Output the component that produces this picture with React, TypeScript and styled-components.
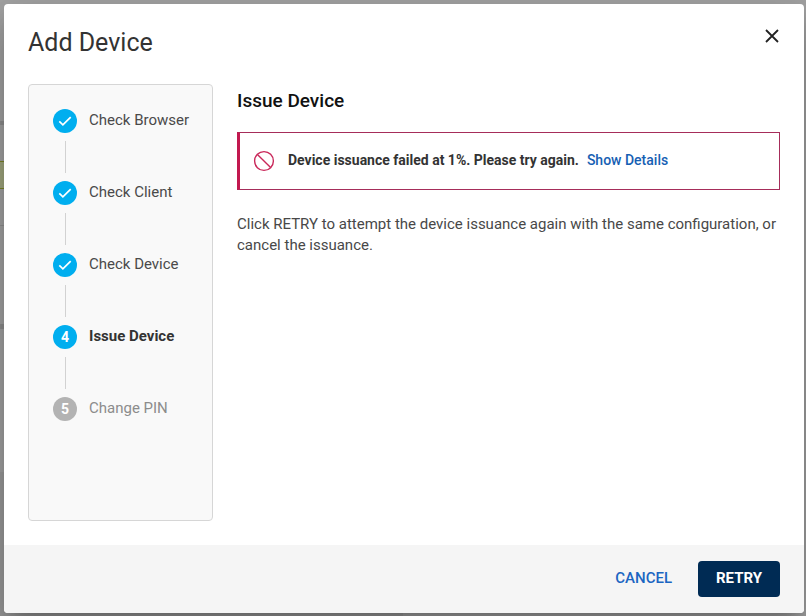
import React from "react";
import styled, { createGlobalStyle } from "styled-components";

const GlobalStyle = createGlobalStyle`
  * { box-sizing: border-box; }
  body {
    margin: 0;
    background: #a4a4a4;
    color: #484848;
    font: 15px/21px Roboto, "Liberation Sans", sans-serif;
  }
  button { font-family: inherit; cursor: pointer; }
`;

const Shell = styled.div`
  position: relative;
  display: flex;
  min-height: 100vh;
  padding: 4px 2px 3px 4px;
`;

const Backdrop = styled.div`
  position: absolute;
  inset: 0 50% 0 0;
  display: flex;
  flex-direction: column;
  overflow: hidden;
`;

const Band = styled.div<{ $height?: number; $color: string }>`
  flex: ${(p) => (p.$height ? `0 0 ${p.$height}px` : "1")};
  background: ${(p) => p.$color};
`;

const BackdropTag = styled.div`
  flex: 0 0 28px;
  width: 40px;
  background: #a3a980;
  border: solid #7d8826;
  border-width: 1px 0;
`;

const Dialog = styled.section`
  position: relative;
  flex: 1;
  display: flex;
  flex-direction: column;
  min-width: 0;
  border-radius: 4px;
  overflow: hidden;
  background: #fff;
  box-shadow: 0 11px 15px -7px rgba(0, 0, 0, 0.2),
    0 24px 38px 3px rgba(0, 0, 0, 0.14), 0 9px 46px 8px rgba(0, 0, 0, 0.12);
`;

const Header = styled.header`
  display: flex;
  justify-content: space-between;
  align-items: flex-start;
  padding: 20px 20px 24px 24px;
`;

const Title = styled.h1`
  margin: 0;
  padding-top: 2px;
  font-size: 25px;
  line-height: 34px;
  font-weight: 400;
  color: #333;
`;

const CloseButton = styled.button`
  display: flex;
  padding: 0;
  border: 0;
  background: none;
  color: #222;
`;

const Body = styled.div`
  flex: 1;
  display: flex;
  align-items: stretch;
  gap: 24px;
  padding: 0 24px 24px;
`;

const Steps = styled.ol`
  flex: 0 0 185px;
  margin: 0;
  padding: 24px 16px 24px 24px;
  list-style: none;
  border: 1px solid #d6d6d6;
  border-radius: 4px;
  background: #f9f9f9;
`;

type StepState = "done" | "current" | "upcoming";

const stepColors: Record<StepState, string> = {
  done: "#4a4a4a",
  current: "#333",
  upcoming: "#8c8c8c",
};

const StepItem = styled.li<{ $state: StepState }>`
  color: ${(p) => stepColors[p.$state]};
  font-weight: ${(p) => (p.$state === "current" ? 700 : 400)};

  &:not(:last-child)::after {
    content: "";
    display: block;
    width: 1px;
    height: 32px;
    margin: 8px 12px;
    background: #d2d2d2;
  }
`;

const StepRow = styled.div`
  display: flex;
  align-items: center;
  gap: 12px;
  height: 24px;
`;

const StepBadge = styled.span<{ $state: StepState }>`
  display: flex;
  align-items: center;
  justify-content: center;
  width: 24px;
  height: 24px;
  border-radius: 50%;
  background: ${(p) => (p.$state === "upcoming" ? "#b3b3b3" : "#00aeef")};
  color: #fff;
  font-size: 14px;
  line-height: 24px;
  font-weight: 700;
`;

const StepLabel = styled.span`
  white-space: nowrap;
  line-height: 22px;
  padding-bottom: 2px;
`;

const Content = styled.main`
  flex: 1;
  min-width: 0;
`;

const ContentTitle = styled.h2`
  margin: 4px 0 18px;
  font-size: 19px;
  line-height: 26px;
  font-weight: 500;
  color: #111;
`;

const Alert = styled.div`
  display: flex;
  align-items: center;
  gap: 13px;
  min-height: 58px;
  padding: 8px 14px 8px 13px;
  border: 1px solid #a62d5a;
  border-left: 3px solid #c2184f;
`;

const AlertText = styled.p`
  display: flex;
  flex-wrap: wrap;
  column-gap: 8px;
  margin: 0;
  padding-bottom: 2px;
  font-size: 14px;
  font-weight: 700;
  color: #333;
`;

const DetailsLink = styled.a`
  font-weight: 500;
  color: #1660b3;
  text-decoration: none;
`;

const Message = styled.p`
  margin: 24px 0 0;
`;

const Footer = styled.footer`
  display: flex;
  align-items: center;
  justify-content: flex-end;
  gap: 10px;
  padding: 16px 24px;
  background: #f5f5f5;
`;

const ActionButton = styled.button<{ $primary?: boolean }>`
  min-width: 82px;
  height: 36px;
  padding: 0 16px 2px;
  border: 0;
  border-radius: 4px;
  font-size: 15px;
  font-weight: ${(p) => (p.$primary ? 700 : 500)};
  background: ${(p) => (p.$primary ? "#002b54" : "transparent")};
  color: ${(p) => (p.$primary ? "#fff" : "#1b66c2")};
`;

const CheckIcon = () => (
  <svg width="14" height="12" viewBox="0 0 14 12" fill="none" aria-hidden="true">
    <path d="M1.3 6.4 4.9 9.8 12.7 2.2" stroke="#fff" strokeWidth="1.7" />
  </svg>
);

const CloseIcon = () => (
  <svg width="24" height="24" viewBox="0 0 24 24" fill="none" aria-hidden="true">
    <path d="m6 6 12 12M18 6 6 18" stroke="currentColor" strokeWidth="1.8" />
  </svg>
);

const BlockedIcon = () => (
  <svg width="22" height="22" viewBox="0 0 22 22" fill="none" aria-hidden="true">
    <g stroke="#c9285a" strokeWidth="1.4">
      <circle cx="11" cy="11" r="9.4" />
      <path d="m4.4 4.4 13.2 13.2" />
    </g>
  </svg>
);

const steps: { label: string; state: StepState }[] = [
  { label: "Check Browser", state: "done" },
  { label: "Check Client", state: "done" },
  { label: "Check Device", state: "done" },
  { label: "Issue Device", state: "current" },
  { label: "Change PIN", state: "upcoming" },
];

export default function App() {
  return (
    <>
      <GlobalStyle />
      <Shell>
        <Backdrop aria-hidden="true">
          <Band $height={121} $color="#a4a4a4" />
          <Band $height={4} $color="#8f8f8f" />
          <Band $height={36} $color="#a4a4a4" />
          <BackdropTag />
          <Band $height={36} $color="#a4a4a4" />
          <Band $height={1} $color="#919191" />
          <Band $height={98} $color="#a4a4a4" />
          <Band $height={5} $color="#8f8f8f" />
          <Band $height={143} $color="#a4a4a4" />
          <Band $color="#9c9c9c" />
        </Backdrop>
        <Dialog role="dialog" aria-modal="true" aria-labelledby="dialog-title">
          <Header>
            <Title id="dialog-title">Add Device</Title>
            <CloseButton type="button" aria-label="Close">
              <CloseIcon />
            </CloseButton>
          </Header>
          <Body>
            <Steps>
              {steps.map(({ label, state }, index) => (
                <StepItem
                  key={label}
                  $state={state}
                  aria-current={state === "current" ? "step" : undefined}
                >
                  <StepRow>
                    <StepBadge $state={state}>
                      {state === "done" ? <CheckIcon /> : index + 1}
                    </StepBadge>
                    <StepLabel>{label}</StepLabel>
                  </StepRow>
                </StepItem>
              ))}
            </Steps>
            <Content>
              <ContentTitle>Issue Device</ContentTitle>
              <Alert role="alert">
                <BlockedIcon />
                <AlertText>
                  Device issuance failed at 1%. Please try again.
                  <DetailsLink href="#details">Show Details</DetailsLink>
                </AlertText>
              </Alert>
              <Message>
                Click RETRY to attempt the device issuance again with the same
                configuration, or cancel the issuance.
              </Message>
            </Content>
          </Body>
          <Footer>
            <ActionButton type="button">CANCEL</ActionButton>
            <ActionButton type="button" $primary>
              RETRY
            </ActionButton>
          </Footer>
        </Dialog>
      </Shell>
    </>
  );
}
